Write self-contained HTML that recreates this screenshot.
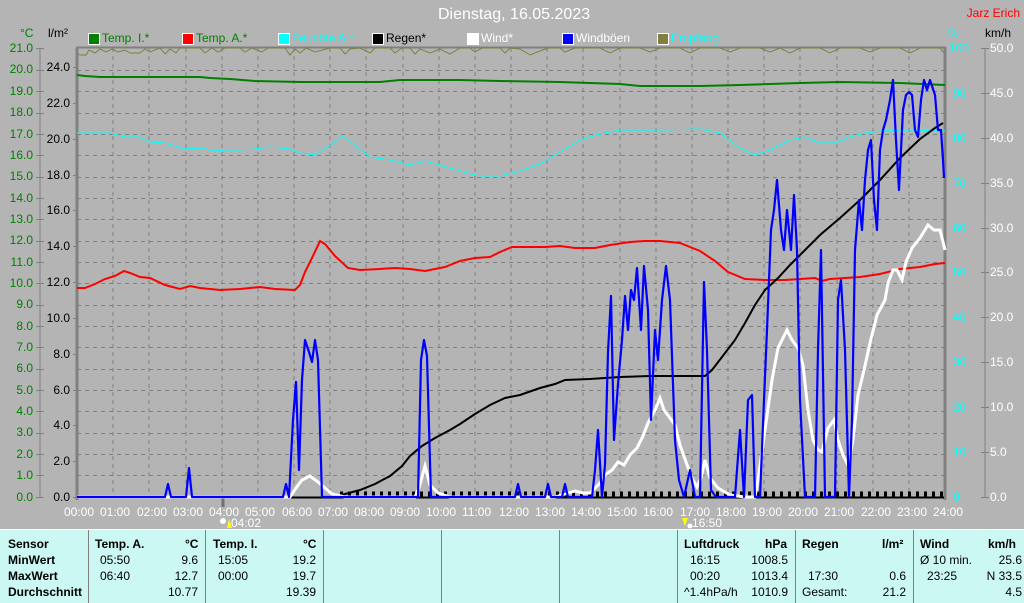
<!DOCTYPE html>
<html><head><meta charset="utf-8"><style>
*{margin:0;padding:0}
body{width:1024px;height:602px;background:#b4b4b4;position:relative;overflow:hidden;font-family:"Liberation Sans",Arial,sans-serif;font-size:12px}
.a{position:absolute;white-space:nowrap}
.g{color:#008000;width:33px;text-align:right}
.k{color:#000;width:70px;text-align:right}
.c{color:#00ffff}
.w{color:#fff}
.lb{position:absolute;width:10px;height:10px;border:1px solid #fff;top:33px}
.tbl{position:absolute;left:0;top:529px;width:1024px;height:73px;background:#ccf8f4;border-top:1px solid #fff}
.vl{position:absolute;top:0;width:1px;height:73px;background:#808080}
.b{font-weight:bold}
</style></head><body>
<div class="a w" style="left:438px;top:6px;font-size:16px">Dienstag, 16.05.2023</div>
<div class="a" style="right:4px;top:6px;color:#ff0000">Jarz Erich</div>
<div class="a" style="left:20px;top:26px;color:#008000">°C</div>
<div class="a" style="left:48px;top:26px">l/m²</div>
<div class="a c" style="left:948px;top:26px">%</div>
<div class="a" style="left:985px;top:26px">km/h</div>

<div class="lb" style="left:88px;background:#008000"></div><div class="a" style="left:102px;top:31px;color:#008000">Temp. I.*</div>
<div class="lb" style="left:182px;background:#ff0000"></div><div class="a" style="left:196px;top:31px;color:#008000">Temp. A.*</div>
<div class="lb" style="left:278px;background:#00ffff"></div><div class="a c" style="left:292px;top:31px">Feuchte A.*</div>
<div class="lb" style="left:372px;background:#000"></div><div class="a" style="left:386px;top:31px">Regen*</div>
<div class="lb" style="left:467px;background:#fff"></div><div class="a w" style="left:481px;top:31px">Wind*</div>
<div class="lb" style="left:562px;background:#0000ff"></div><div class="a w" style="left:576px;top:31px">Windböen</div>
<div class="lb" style="left:657px;background:#808040"></div><div class="a c" style="left:671px;top:31px">Empfang</div>

<svg class="a" style="left:0;top:0" width="1024" height="530" viewBox="0 0 1024 530">
<g stroke="#808080" stroke-dasharray="4,4" stroke-width="1">
<path d="M113 48V497M149 48V497M186 48V497M222 48V497M258 48V497M294 48V497M330 48V497M366 48V497M403 48V497M439 48V497M475 48V497M511 48V497M547 48V497M583 48V497M620 48V497M656 48V497M692 48V497M728 48V497M764 48V497M800 48V497M837 48V497M873 48V497M909 48V497"/>
<path d="M77 70.5H945M77 91.5H945M77 113.5H945M77 134.5H945M77 155.5H945M77 177.5H945M77 198.5H945M77 219.5H945M77 241.5H945M77 262.5H945M77 283.5H945M77 305.5H945M77 326.5H945M77 347.5H945M77 369.5H945M77 390.5H945M77 411.5H945M77 433.5H945M77 454.5H945M77 475.5H945"/>
</g>
<g stroke="#808080" fill="none">
<path d="M40 48V497M36 48.5H44M36 70.5H44M36 91.5H44M36 113.5H44M36 134.5H44M36 155.5H44M36 177.5H44M36 198.5H44M36 219.5H44M36 241.5H44M36 262.5H44M36 283.5H44M36 305.5H44M36 326.5H44M36 347.5H44M36 369.5H44M36 390.5H44M36 411.5H44M36 433.5H44M36 454.5H44M36 475.5H44M36 497.5H44"/>
<path d="M985 48V497M981 48.5H989M981 93.5H989M981 138.5H989M981 183.5H989M981 228.5H989M981 272.5H989M981 317.5H989M981 362.5H989M981 407.5H989M981 452.5H989M981 497.5H989"/>
<path d="M73 67.5H77M73 103.5H77M73 139.5H77M73 175.5H77M73 210.5H77M73 246.5H77M73 282.5H77M73 318.5H77M73 354.5H77M73 390.5H77M73 425.5H77M73 461.5H77M73 497.5H77"/>
<path d="M77 48V500" stroke-width="3"/><path d="M945 47V500" stroke-width="3"/><path d="M76 47.5H946" stroke-width="2"/>
<path d="M223 498V507" stroke="#707070" stroke-width="3"/>
</g>
<path d="M78 497.5H944" stroke="#000" stroke-width="2"/>
<path d="M340 494H945" stroke="#000" stroke-width="5" stroke-dasharray="3,5"/>
<polyline fill="none" stroke="#808040" stroke-width="1" points="77,53 80,55 86,55 89,50 95,53 100,49 106,52 112,49 118,52 125,50 130,53 140,53 145,49 150,52 160,48 165,54 170,49 176,53 180,48 200,48 205,53 212,48 218,52 225,48 240,48 245,52 252,48 262,52 268,48 285,48 290,55 295,49 300,53 306,48 315,52 330,48 340,48 345,54 350,49 360,48 370,53 375,48 390,48 395,53 402,48 410,48 415,54 420,49 430,53 440,49 450,54 460,48 470,48 475,52 482,48 500,48 505,53 510,48 520,49 530,55 540,51 548,48 560,48 565,52 575,48 600,48 610,53 620,48 640,48 650,52 660,48 680,48 690,53 700,48 720,48 730,52 740,48 760,48 770,52 780,48 790,53 800,48 820,48 830,53 840,48 860,48 870,52 880,48 900,48 910,53 920,48 940,48 944,53"/>
<polyline fill="none" stroke="#008000" stroke-width="2" points="77,75 85,76 100,77 200,77 210,78 230,79 255,81 300,82 380,82 400,80 460,80 500,81 560,82 620,84 640,86 700,86 740,85 800,83 840,82 900,83 945,85"/>
<polyline fill="none" stroke="#00ffff" stroke-width="1" points="77,133 110,133 125,137 140,137 150,142 165,143 185,149 200,148 215,151 225,150 240,150 255,149 270,147 290,149 300,153 315,155 325,149 338,140 342,136 348,140 352,143 370,157 390,160 410,165 425,161 440,165 460,171 480,176 500,176 520,171 540,164 560,152 580,140 600,134 620,130 660,130 700,129 720,133 740,148 755,155 770,150 790,140 805,137 820,143 835,143 850,137 865,133 880,131 905,130 945,131"/>
<polyline fill="none" stroke="#ff0000" stroke-width="2" points="77,288 85,288 95,284 105,279 115,276 124,271 130,273 140,277 150,278 165,285 180,289 190,286 200,288 220,290 240,289 260,287 275,289 295,290 300,285 305,272 312,258 320,241 325,244 335,256 348,268 360,270 380,269 395,268 410,269 425,271 445,267 460,261 475,258 490,257 500,252 512,247 530,247 545,247 560,246 575,248 595,248 610,245 630,242 645,241 660,241 680,243 700,251 715,261 728,272 745,279 765,280 785,280 800,279 815,278 822,281 830,279 860,277 880,274 900,269 920,267 935,264 945,263"/>
<polyline fill="none" stroke="#000" stroke-width="2" points="333,497 345,494 360,490 375,484 390,476 402,466 410,456 422,446 435,438 450,430 460,424 475,414 490,405 505,398 520,395 540,388 555,384 565,380 590,379 620,377 650,376 705,376 712,370 722,357 735,340 745,323 755,305 765,290 778,278 790,265 805,250 820,235 840,218 860,200 880,180 900,158 920,139 935,128 943,123"/>
<polyline fill="none" stroke="#fff" stroke-width="3" points="77,497 290,497 296,488 302,480 310,476 318,482 325,488 332,494 345,497 415,497 419,488 425,466 430,485 438,493 450,497 555,497 565,494 575,491 583,493 590,493 600,483 605,475 612,470 618,462 624,465 630,455 637,448 643,436 648,423 655,410 660,398 664,410 670,418 675,425 680,445 686,462 692,478 697,487 701,478 705,460 710,478 718,488 730,495 745,497 755,497 758,480 765,430 772,380 778,348 787,330 792,340 798,348 803,365 808,410 813,440 818,450 822,452 828,428 834,420 838,440 843,455 848,465 853,440 858,395 864,370 870,343 877,315 885,300 888,283 893,270 897,270 902,280 906,262 912,248 920,238 928,225 934,230 940,230 945,250"/>
<polyline fill="none" stroke="#0000ff" stroke-width="2.2" stroke-linejoin="round" points="77,497 165,497 168,484 171,497 186,497 189,468 192,497 283,497 286,484 289,497 293,420 296,382 299,470 302,380 305,340 309,352 312,362 315,340 318,360 322,497 418,497 421,360 424,340 427,356 431,497 515,497 518,484 521,497 545,497 548,484 551,497 562,497 565,484 568,497 592,497 595,470 598,430 602,497 605,465 608,352 611,296 614,440 618,384 622,340 625,296 628,330 631,290 634,300 637,268 641,330 644,266 648,310 651,420 655,330 658,360 662,300 666,266 670,300 675,440 679,480 684,497 690,470 695,497 700,497 704,282 707,350 711,490 716,497 735,497 740,430 744,497 748,400 752,395 755,497 760,497 764,400 767,330 771,230 774,210 777,180 781,230 784,250 787,210 791,250 794,195 797,250 800,400 805,497 815,497 818,350 821,250 825,497 835,497 838,300 841,280 845,350 849,497 852,420 855,250 859,200 862,230 865,180 868,150 871,140 874,200 877,230 880,150 883,130 886,120 890,100 893,80 896,140 899,190 903,110 906,95 909,92 912,95 915,130 918,137 921,100 924,80 927,90 930,80 935,95 938,130 941,130 943,160 944,178"/>
<circle cx="223" cy="521" r="3" fill="#fff"/><path d="M227 528L229 519L232 528Z" fill="#ffff00"/>
<path d="M682 518L685 526L688 518Z" fill="#ffff00"/><circle cx="690" cy="526" r="2.5" fill="#fff"/>
</svg>

<div class="a g" style="left:0;top:41px">21.0</div><div class="a g" style="left:0;top:62px">20.0</div><div class="a g" style="left:0;top:84px">19.0</div><div class="a g" style="left:0;top:105px">18.0</div><div class="a g" style="left:0;top:127px">17.0</div><div class="a g" style="left:0;top:148px">16.0</div><div class="a g" style="left:0;top:169px">15.0</div><div class="a g" style="left:0;top:191px">14.0</div><div class="a g" style="left:0;top:212px">13.0</div><div class="a g" style="left:0;top:233px">12.0</div><div class="a g" style="left:0;top:255px">11.0</div><div class="a g" style="left:0;top:276px">10.0</div><div class="a g" style="left:0;top:297px">9.0</div><div class="a g" style="left:0;top:319px">8.0</div><div class="a g" style="left:0;top:340px">7.0</div><div class="a g" style="left:0;top:361px">6.0</div><div class="a g" style="left:0;top:383px">5.0</div><div class="a g" style="left:0;top:404px">4.0</div><div class="a g" style="left:0;top:425px">3.0</div><div class="a g" style="left:0;top:447px">2.0</div><div class="a g" style="left:0;top:468px">1.0</div><div class="a g" style="left:0;top:490px">0.0</div>
<div class="a k" style="left:0;top:60px">24.0</div><div class="a k" style="left:0;top:96px">22.0</div><div class="a k" style="left:0;top:132px">20.0</div><div class="a k" style="left:0;top:168px">18.0</div><div class="a k" style="left:0;top:203px">16.0</div><div class="a k" style="left:0;top:239px">14.0</div><div class="a k" style="left:0;top:275px">12.0</div><div class="a k" style="left:0;top:311px">10.0</div><div class="a k" style="left:0;top:347px">8.0</div><div class="a k" style="left:0;top:383px">6.0</div><div class="a k" style="left:0;top:418px">4.0</div><div class="a k" style="left:0;top:454px">2.0</div><div class="a k" style="left:0;top:490px">0.0</div>
<div class="a c" style="left:949px;top:41px">100</div><div class="a c" style="left:953px;top:86px">90</div><div class="a c" style="left:953px;top:131px">80</div><div class="a c" style="left:953px;top:176px">70</div><div class="a c" style="left:953px;top:221px">60</div><div class="a c" style="left:953px;top:265px">50</div><div class="a c" style="left:953px;top:310px">40</div><div class="a c" style="left:953px;top:355px">30</div><div class="a c" style="left:953px;top:400px">20</div><div class="a c" style="left:953px;top:445px">10</div><div class="a c" style="left:953px;top:490px">0</div>
<div class="a w" style="left:990px;top:41px">50.0</div><div class="a w" style="left:990px;top:86px">45.0</div><div class="a w" style="left:990px;top:131px">40.0</div><div class="a w" style="left:990px;top:176px">35.0</div><div class="a w" style="left:990px;top:221px">30.0</div><div class="a w" style="left:990px;top:265px">25.0</div><div class="a w" style="left:990px;top:310px">20.0</div><div class="a w" style="left:990px;top:355px">15.0</div><div class="a w" style="left:990px;top:400px">10.0</div><div class="a w" style="left:990px;top:445px">5.0</div><div class="a w" style="left:990px;top:490px">0.0</div>
<div class="a w" style="left:64px;top:505px">00:00</div><div class="a w" style="left:100px;top:505px">01:00</div><div class="a w" style="left:137px;top:505px">02:00</div><div class="a w" style="left:173px;top:505px">03:00</div><div class="a w" style="left:209px;top:505px">04:00</div><div class="a w" style="left:245px;top:505px">05:00</div><div class="a w" style="left:282px;top:505px">06:00</div><div class="a w" style="left:318px;top:505px">07:00</div><div class="a w" style="left:354px;top:505px">08:00</div><div class="a w" style="left:390px;top:505px">09:00</div><div class="a w" style="left:426px;top:505px">10:00</div><div class="a w" style="left:462px;top:505px">11:00</div><div class="a w" style="left:499px;top:505px">12:00</div><div class="a w" style="left:535px;top:505px">13:00</div><div class="a w" style="left:571px;top:505px">14:00</div><div class="a w" style="left:607px;top:505px">15:00</div><div class="a w" style="left:643px;top:505px">16:00</div><div class="a w" style="left:680px;top:505px">17:00</div><div class="a w" style="left:716px;top:505px">18:00</div><div class="a w" style="left:752px;top:505px">19:00</div><div class="a w" style="left:788px;top:505px">20:00</div><div class="a w" style="left:824px;top:505px">21:00</div><div class="a w" style="left:861px;top:505px">22:00</div><div class="a w" style="left:897px;top:505px">23:00</div><div class="a w" style="left:933px;top:505px">24:00</div>
<div class="a w" style="left:231px;top:516px">04:02</div>
<div class="a w" style="left:692px;top:516px">16:50</div>

<div class="tbl">
<div class="vl" style="left:88px"></div><div class="vl" style="left:205px"></div><div class="vl" style="left:323px"></div><div class="vl" style="left:441px"></div><div class="vl" style="left:559px"></div><div class="vl" style="left:677px"></div><div class="vl" style="left:795px"></div><div class="vl" style="left:913px"></div>
<div class="a b" style="left:8px;top:7px">Sensor</div><div class="a b" style="left:8px;top:23px">MinWert</div><div class="a b" style="left:8px;top:39px">MaxWert</div><div class="a b" style="left:8px;top:55px">Durchschnitt</div>
<div class="a b" style="left:95px;top:7px">Temp. A.</div><div class="a b" style="left:185px;top:7px">°C</div>
<div class="a" style="left:100px;top:23px">05:50</div><div class="a" style="left:100px;top:39px">06:40</div>
<div class="a" style="left:140px;top:23px;width:58px;text-align:right">9.6</div><div class="a" style="left:140px;top:39px;width:58px;text-align:right">12.7</div><div class="a" style="left:140px;top:55px;width:58px;text-align:right">10.77</div>
<div class="a b" style="left:213px;top:7px">Temp. I.</div><div class="a b" style="left:303px;top:7px">°C</div>
<div class="a" style="left:218px;top:23px">15:05</div><div class="a" style="left:218px;top:39px">00:00</div>
<div class="a" style="left:258px;top:23px;width:58px;text-align:right">19.2</div><div class="a" style="left:258px;top:39px;width:58px;text-align:right">19.7</div><div class="a" style="left:258px;top:55px;width:58px;text-align:right">19.39</div>
<div class="a b" style="left:684px;top:7px">Luftdruck</div><div class="a b" style="left:765px;top:7px">hPa</div>
<div class="a" style="left:690px;top:23px">16:15</div><div class="a" style="left:690px;top:39px">00:20</div><div class="a" style="left:684px;top:55px">^1.4hPa/h</div>
<div class="a" style="left:730px;top:23px;width:58px;text-align:right">1008.5</div><div class="a" style="left:730px;top:39px;width:58px;text-align:right">1013.4</div><div class="a" style="left:730px;top:55px;width:58px;text-align:right">1010.9</div>
<div class="a b" style="left:802px;top:7px">Regen</div><div class="a b" style="left:882px;top:7px">l/m²</div>
<div class="a" style="left:808px;top:39px">17:30</div><div class="a" style="left:802px;top:55px">Gesamt:</div>
<div class="a" style="left:848px;top:39px;width:58px;text-align:right">0.6</div><div class="a" style="left:848px;top:55px;width:58px;text-align:right">21.2</div>
<div class="a b" style="left:920px;top:7px">Wind</div><div class="a b" style="left:988px;top:7px">km/h</div>
<div class="a" style="left:920px;top:23px">Ø 10 min.</div><div class="a" style="left:927px;top:39px">23:25</div>
<div class="a" style="left:962px;top:23px;width:60px;text-align:right">25.6</div><div class="a" style="left:962px;top:39px;width:60px;text-align:right">N 33.5</div><div class="a" style="left:962px;top:55px;width:60px;text-align:right">4.5</div>
</div>
</body></html>
